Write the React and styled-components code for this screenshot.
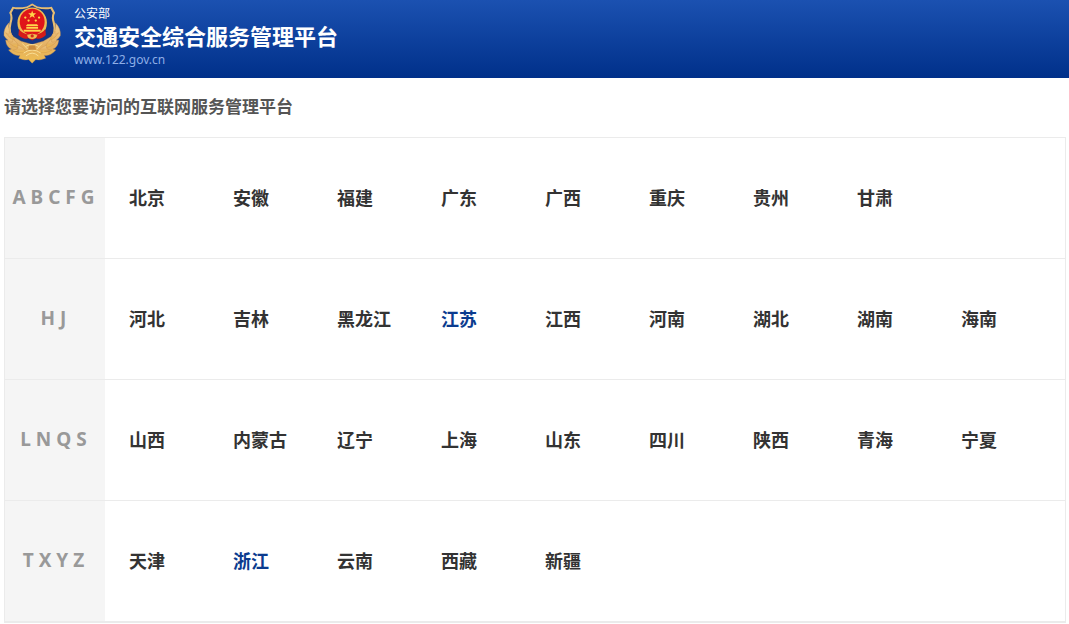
import React from 'react';
import styled, { createGlobalStyle } from 'styled-components';

const regions = [
  {
    letters: 'A B C F G',
    cities: ['北京', '安徽', '福建', '广东', '广西', '重庆', '贵州', '甘肃'],
  },
  {
    letters: 'H J',
    cities: ['河北', '吉林', '黑龙江', '江苏', '江西', '河南', '湖北', '湖南', '海南'],
  },
  {
    letters: 'L N Q S',
    cities: ['山西', '内蒙古', '辽宁', '上海', '山东', '四川', '陕西', '青海', '宁夏'],
  },
  {
    letters: 'T X Y Z',
    cities: ['天津', '浙江', '云南', '西藏', '新疆'],
  },
];

const highlighted = ['江苏', '浙江'];

const Emblem = () => (
  <EmblemSvg viewBox="8 6 180 186" aria-hidden="true">
    <defs>
      <linearGradient id="gold" x1="0" y1="0" x2="0" y2="1">
        <stop offset="0" stopColor="#f0cb8c" />
        <stop offset="0.6" stopColor="#e3b060" />
        <stop offset="1" stopColor="#f0bf50" />
      </linearGradient>
    </defs>
    {/* shield */}
    <path
      d="M97 9 L113 18 Q138 23 157 19 L167 37 Q160 50 166 66 Q176 100 154 128 L97 165 L40 128 Q18 100 28 66 Q34 50 27 37 L37 19 Q56 23 81 18 Z"
      fill="#e7bd72"
    />
    <path
      d="M97 15 L111 23 Q136 29 153 25 L160 38 Q154 51 160 69 Q168 98 149 123 L97 158 L45 123 Q26 98 34 69 Q40 51 34 38 L41 25 Q58 29 83 23 Z"
      fill="#123685"
    />
    {/* wreath */}
    <g fill="url(#gold)" stroke="#cb9148" strokeWidth="1.2">
      <path d="M26 68 Q9 86 11 107 Q17 118 24 121 L16 121 Q19 143 34 148 L25 151 Q42 171 60 167 L56 176 Q76 184 86 180 L97 191 L108 180 Q118 184 138 176 L134 167 Q152 171 169 151 L160 148 Q175 143 178 121 L170 121 Q177 118 183 107 Q185 86 168 68 Q172 92 155 110 L131 124 L97 134 L63 124 L39 110 Q22 92 26 68 Z" />
      <path d="M16 98 Q27 116 44 122 Q35 101 27 94 Q31 109 16 98 Z" />
      <path d="M178 98 Q167 116 150 122 Q159 101 167 94 Q163 109 178 98 Z" />
      <path d="M22 124 Q36 143 60 143 Q51 126 37 117 Q44 133 22 124 Z" />
      <path d="M172 124 Q158 143 134 143 Q143 126 157 117 Q150 133 172 124 Z" />
      <path d="M37 151 Q56 164 80 156 Q69 140 52 136 Q60 149 37 151 Z" />
      <path d="M157 151 Q138 164 114 156 Q125 140 142 136 Q134 149 157 151 Z" />
    </g>
    {/* national emblem */}
    <ellipse cx="97" cy="68" rx="45" ry="47" fill="#eebd52" />
    <ellipse cx="97" cy="65" rx="38" ry="40" fill="#e01519" />
    <path
      d="M97 30 L100 39 L109 39 L102 45 L105 53 L97 48 L89 53 L92 45 L85 39 L94 39 Z"
      fill="#ffd64a"
    />
    <g fill="#ffd64a">
      <circle cx="76" cy="52" r="3.5" />
      <circle cx="86" cy="61" r="3.5" />
      <circle cx="108" cy="61" r="3.5" />
      <circle cx="118" cy="52" r="3.5" />
      <path d="M82 72 L112 72 L116 78 L78 78 Z" />
      <path d="M79 80 H115 V86 H79 Z" />
      <path d="M71 89 H123 V95 H71 Z" />
    </g>
    <path d="M57 87 Q65 100 86 104 L97 99 L108 104 Q129 100 137 87 L139 105 Q123 121 109 115 L97 122 L85 115 Q71 121 55 105 Z" fill="#d31c19" />
    <path d="M81 107 Q97 95 113 107 L108 114 Q97 120 86 114 Z" fill="#eebd52" />
    <circle cx="97" cy="108" r="5" fill="#cf2a1c" />
    {/* tower and ribbon below */}
    <g stroke="#f8dd94" strokeWidth="3" fill="none">
      <path d="M67 131 L83 148 M127 131 L111 148" />
      <path d="M77 140 Q97 128 117 140" />
      <path d="M71 160 Q97 142 123 160" />
      <path d="M78 169 Q97 152 116 169" />
    </g>
    <path d="M88 137 H106 L109 150 H85 Z" fill="#c98b3e" />
  </EmblemSvg>
);

const App = () => {
  return (
    <>
      <GlobalStyle />
      <Header>
        <Emblem />
        <Brand>
          <Ministry>公安部</Ministry>
          <Title>交通安全综合服务管理平台</Title>
          <Domain href="#">www.122.gov.cn</Domain>
        </Brand>
      </Header>
      <main>
        <Prompt>请选择您要访问的互联网服务管理平台</Prompt>
        <RegionList>
          {regions.map((region) => (
            <Region key={region.letters}>
              <Letters>{region.letters}</Letters>
              <Cities>
                {region.cities.map((city) => (
                  <li key={city}>
                    <City href="#" $active={highlighted.includes(city)}>{city}</City>
                  </li>
                ))}
              </Cities>
            </Region>
          ))}
        </RegionList>
      </main>
    </>
  );
};

const GlobalStyle = createGlobalStyle`
  * {
    box-sizing: border-box;
  }
  body {
    margin: 0;
    background: #fff;
    color: #333;
    font-family: 'Noto Sans', 'Noto Sans CJK SC', sans-serif;
  }
`;

const Header = styled.header`
  display: flex;
  align-items: flex-start;
  gap: 12px;
  min-height: 78px;
  padding: 2px 3px;
  background: linear-gradient(#1b51b1, #00308a);
`;

const EmblemSvg = styled.svg`
  flex: none;
  width: 59px;
  height: 62px;
`;

const Brand = styled.div`
  display: flex;
  flex-direction: column;
  padding-top: 4px;
`;

const Ministry = styled.span`
  color: #fff;
  font-size: 12px;
  line-height: 16px;
`;

const Title = styled.h1`
  margin: 0;
  color: #fff;
  font-size: 22px;
  font-weight: bold;
  line-height: 28px;
`;

const Domain = styled.a`
  color: #8eaee6;
  font-size: 12px;
  line-height: 20px;
  text-decoration: none;
`;

const Prompt = styled.h2`
  margin: 0;
  padding: 17px 4px 18px;
  color: #555;
  font-size: 17px;
  font-weight: bold;
  line-height: 24px;
`;

const RegionList = styled.div`
  margin: 0 3px 0 4px;
  border: 1px solid #ebebeb;
`;

const Region = styled.section`
  display: flex;
  min-height: 121px;
  border-bottom: 1px solid #ebebeb;
`;

const Letters = styled.h3`
  display: flex;
  flex: none;
  align-items: center;
  justify-content: center;
  width: 100px;
  margin: 0;
  padding: 0 3px 2px 0;
  background: #f5f5f5;
  color: #999;
  font-size: 19px;
  font-weight: bold;
  line-height: 28px;
`;

const Cities = styled.ul`
  display: grid;
  flex: 1;
  grid-template-columns: repeat(auto-fill, 104px);
  align-items: center;
  margin: 0;
  padding: 0 0 0 24px;
  list-style: none;
`;

const City = styled.a`
  color: ${(props) => (props.$active ? '#0b3b8f' : '#333')};
  font-size: 18px;
  font-weight: bold;
  line-height: 28px;
  text-decoration: none;
  &:hover {
    color: #0b3b8f;
  }
`;

export default App;
